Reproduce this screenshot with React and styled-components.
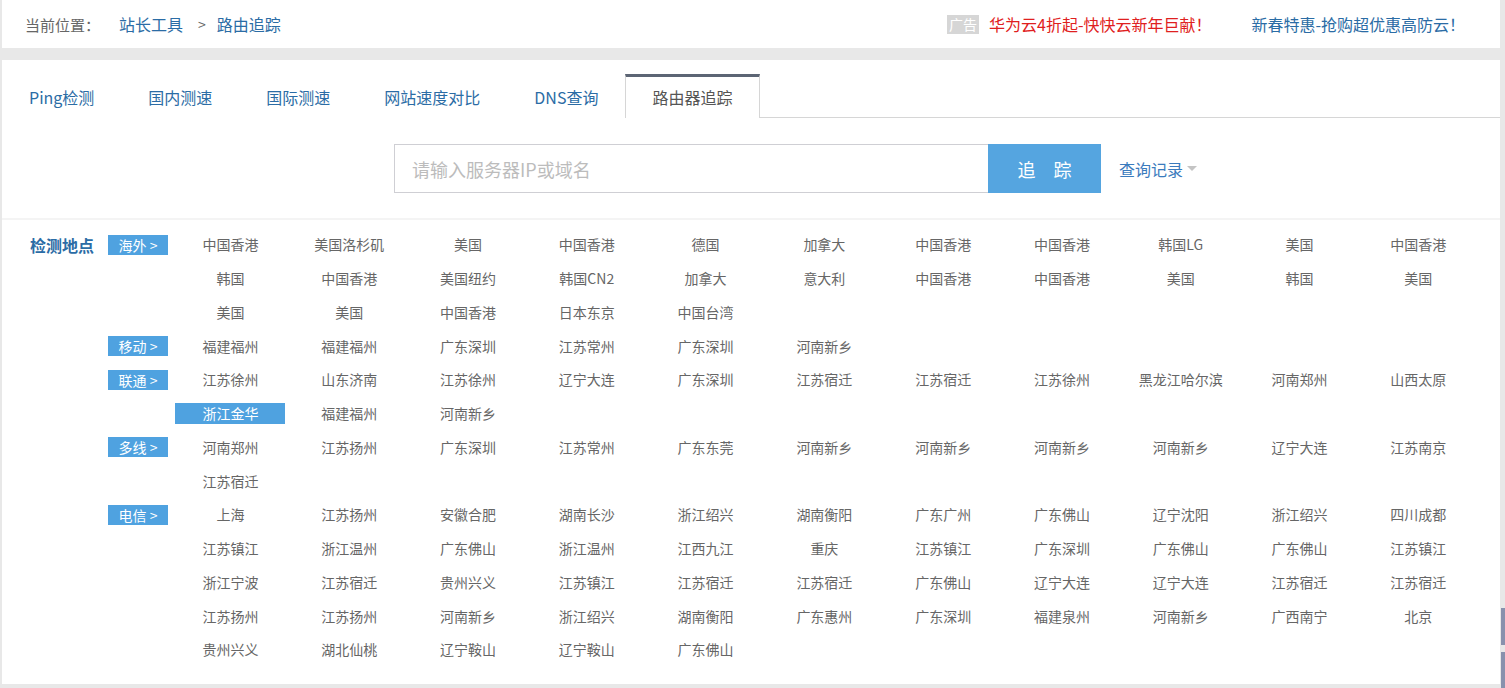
import styled, { createGlobalStyle } from 'styled-components';

const GlobalStyle = createGlobalStyle`
  html, body {
    margin: 0;
    padding: 0;
    background: #e8e8e8;
  }
  body {
    font-family: "Noto Sans CJK SC", "Noto Sans", sans-serif;
    color: #666;
  }
  * {
    box-sizing: border-box;
  }
`;

const Page = styled.div`
  padding: 0 5px 4px 2px;
  display: flex;
  flex-direction: column;
  gap: 12px;
`;

const Card = styled.section`
  background: #fff;
`;

const TopBar = styled(Card)`
  height: 48px;
  display: flex;
  align-items: center;
  justify-content: space-between;
  padding: 0 35px 0 23px;
  font-size: 15px;
`;

const Crumbs = styled.div`
  display: flex;
  align-items: center;
  color: #666;

  & > a {
    color: #2b6ca5;
    text-decoration: none;
    font-size: 16px;
  }
  & > .sep {
    margin: 0 11px 0 15px;
    font-size: 14px;
  }
  & > .label {
    margin-right: 19px;
  }
`;

const Ads = styled.div`
  display: flex;
  align-items: center;
  gap: 40px;
`;

const AdItem = styled.a`
  display: flex;
  align-items: center;
  gap: 10px;
  color: ${(p) => (p.$red ? '#df2020' : '#2b6ca5')};
  text-decoration: none;
  font-size: 16px;
`;

const AdBadge = styled.span`
  background: #d6d6d6;
  color: #fff;
  font-size: 14px;
  line-height: 19px;
  padding: 0 2px;
`;

const Tabs = styled.nav`
  display: flex;
  padding-top: 14px;
  border-bottom: 1px solid #d6d6d6;
`;

const Tab = styled.a`
  height: 44px;
  padding: 0 26px;
  display: flex;
  align-items: center;
  font-size: 16px;
  text-decoration: none;
  color: ${(p) => (p.$active ? '#555' : '#2b6ca5')};
  border-top: 3px solid ${(p) => (p.$active ? '#5c6574' : 'transparent')};
  border-left: 1px solid ${(p) => (p.$active ? '#d6d6d6' : 'transparent')};
  border-right: 1px solid ${(p) => (p.$active ? '#d6d6d6' : 'transparent')};
  background: #fff;
  margin-bottom: -1px;
  padding-bottom: 1px;
`;

const SearchRow = styled.div`
  display: flex;
  align-items: center;
  padding: 26px 0 25px 392px;
  border-bottom: 2px solid #f4f4f4;
`;

const Input = styled.input`
  width: 594px;
  height: 49px;
  border: 1px solid #cfcfd4;
  border-right: none;
  padding: 0 17px;
  font-family: inherit;
  font-size: 18px;
  color: #333;
  outline: none;

  &::placeholder {
    color: #bcbcbc;
  }
`;

const TraceButton = styled.button`
  width: 113px;
  height: 49px;
  border: none;
  background: #55a5e0;
  color: #fff;
  font-family: inherit;
  font-size: 18px;
  cursor: pointer;
`;

const History = styled.a`
  margin-left: 18px;
  color: #3b7bbd;
  font-size: 16px;
  display: flex;
  align-items: center;
  gap: 4px;
  text-decoration: none;

  &::after {
    content: '';
    border-left: 5px solid transparent;
    border-right: 5px solid transparent;
    border-top: 5px solid #c4c4c4;
  }
`;

const Locations = styled.div`
  display: flex;
  padding: 8px 0 17px 28px;
`;

const Title = styled.div`
  width: 78px;
  height: 33.75px;
  display: flex;
  align-items: center;
  font-size: 16px;
  font-weight: bold;
  color: #2b6ca5;
`;

const Groups = styled.div`
  display: flex;
  flex-direction: column;
`;

const Group = styled.div`
  display: flex;
  align-items: flex-start;
`;

const TagCell = styled.div`
  width: 63px;
  height: 33.75px;
  display: flex;
  align-items: center;
`;

const Tag = styled.span`
  width: 60px;
  height: 20px;
  background: #4fa2e0;
  color: #fff;
  font-size: 14px;
  line-height: 20px;
  text-align: center;
`;

const ItemGrid = styled.div`
  display: grid;
  grid-template-columns: repeat(11, 118.8px);
  grid-auto-rows: 33.75px;
`;

const Item = styled.a`
  justify-self: center;
  align-self: center;
  width: 110px;
  height: 21px;
  line-height: 21px;
  text-align: center;
  font-size: 14px;
  text-decoration: none;
  color: ${(p) => (p.$active ? '#fff' : '#666')};
  background: ${(p) => (p.$active ? '#4fa2e0' : 'transparent')};
`;

const SideDock = styled.div`
  position: fixed;
  right: 0;
  bottom: 0;
  width: 4px;
  display: flex;
  flex-direction: column;
  gap: 7px;

  & > span {
    display: block;
    background: #8891ad;
  }
  & > span:first-child {
    height: 37px;
  }
  & > span:last-child {
    height: 36px;
  }
`;

const tabs = ['Ping检测', '国内测速', '国际测速', '网站速度对比', 'DNS查询', '路由器追踪'];

const groups = [
  {
    name: '海外',
    items: [
      '中国香港', '美国洛杉矶', '美国', '中国香港', '德国', '加拿大', '中国香港', '中国香港', '韩国LG', '美国', '中国香港',
      '韩国', '中国香港', '美国纽约', '韩国CN2', '加拿大', '意大利', '中国香港', '中国香港', '美国', '韩国', '美国',
      '美国', '美国', '中国香港', '日本东京', '中国台湾',
    ],
  },
  {
    name: '移动',
    items: ['福建福州', '福建福州', '广东深圳', '江苏常州', '广东深圳', '河南新乡'],
  },
  {
    name: '联通',
    items: [
      '江苏徐州', '山东济南', '江苏徐州', '辽宁大连', '广东深圳', '江苏宿迁', '江苏宿迁', '江苏徐州', '黑龙江哈尔滨', '河南郑州', '山西太原',
      '浙江金华', '福建福州', '河南新乡',
    ],
    active: 11,
  },
  {
    name: '多线',
    items: [
      '河南郑州', '江苏扬州', '广东深圳', '江苏常州', '广东东莞', '河南新乡', '河南新乡', '河南新乡', '河南新乡', '辽宁大连', '江苏南京',
      '江苏宿迁',
    ],
  },
  {
    name: '电信',
    items: [
      '上海', '江苏扬州', '安徽合肥', '湖南长沙', '浙江绍兴', '湖南衡阳', '广东广州', '广东佛山', '辽宁沈阳', '浙江绍兴', '四川成都',
      '江苏镇江', '浙江温州', '广东佛山', '浙江温州', '江西九江', '重庆', '江苏镇江', '广东深圳', '广东佛山', '广东佛山', '江苏镇江',
      '浙江宁波', '江苏宿迁', '贵州兴义', '江苏镇江', '江苏宿迁', '江苏宿迁', '广东佛山', '辽宁大连', '辽宁大连', '江苏宿迁', '江苏宿迁',
      '江苏扬州', '江苏扬州', '河南新乡', '浙江绍兴', '湖南衡阳', '广东惠州', '广东深圳', '福建泉州', '河南新乡', '广西南宁', '北京',
      '贵州兴义', '湖北仙桃', '辽宁鞍山', '辽宁鞍山', '广东佛山',
    ],
  },
];

export default function App() {
  return (
    <>
      <GlobalStyle />
      <Page>
        <TopBar>
          <Crumbs>
            <span className="label">当前位置：</span>
            <a href="#">站长工具</a>
            <span className="sep">&gt;</span>
            <a href="#">路由追踪</a>
          </Crumbs>
          <Ads>
            <AdItem $red href="#">
              <AdBadge>广告</AdBadge>
              华为云4折起-快快云新年巨献！
            </AdItem>
            <AdItem href="#">新春特惠-抢购超优惠高防云！</AdItem>
          </Ads>
        </TopBar>

        <Card>
          <Tabs>
            {tabs.map((t, i) => (
              <Tab key={t} href="#" $active={i === tabs.length - 1}>
                {t}
              </Tab>
            ))}
          </Tabs>

          <SearchRow>
            <Input placeholder="请输入服务器IP或域名" />
            <TraceButton>追　踪</TraceButton>
            <History href="#">查询记录</History>
          </SearchRow>

          <Locations>
            <Title>检测地点</Title>
            <Groups>
              {groups.map((g) => (
                <Group key={g.name}>
                  <TagCell>
                    <Tag>{g.name} &gt;</Tag>
                  </TagCell>
                  <ItemGrid>
                    {g.items.map((it, i) => (
                      <Item key={i} href="#" $active={g.active === i}>
                        {it}
                      </Item>
                    ))}
                  </ItemGrid>
                </Group>
              ))}
            </Groups>
          </Locations>
        </Card>
      </Page>
      <SideDock>
        <span />
        <span />
      </SideDock>
    </>
  );
}
